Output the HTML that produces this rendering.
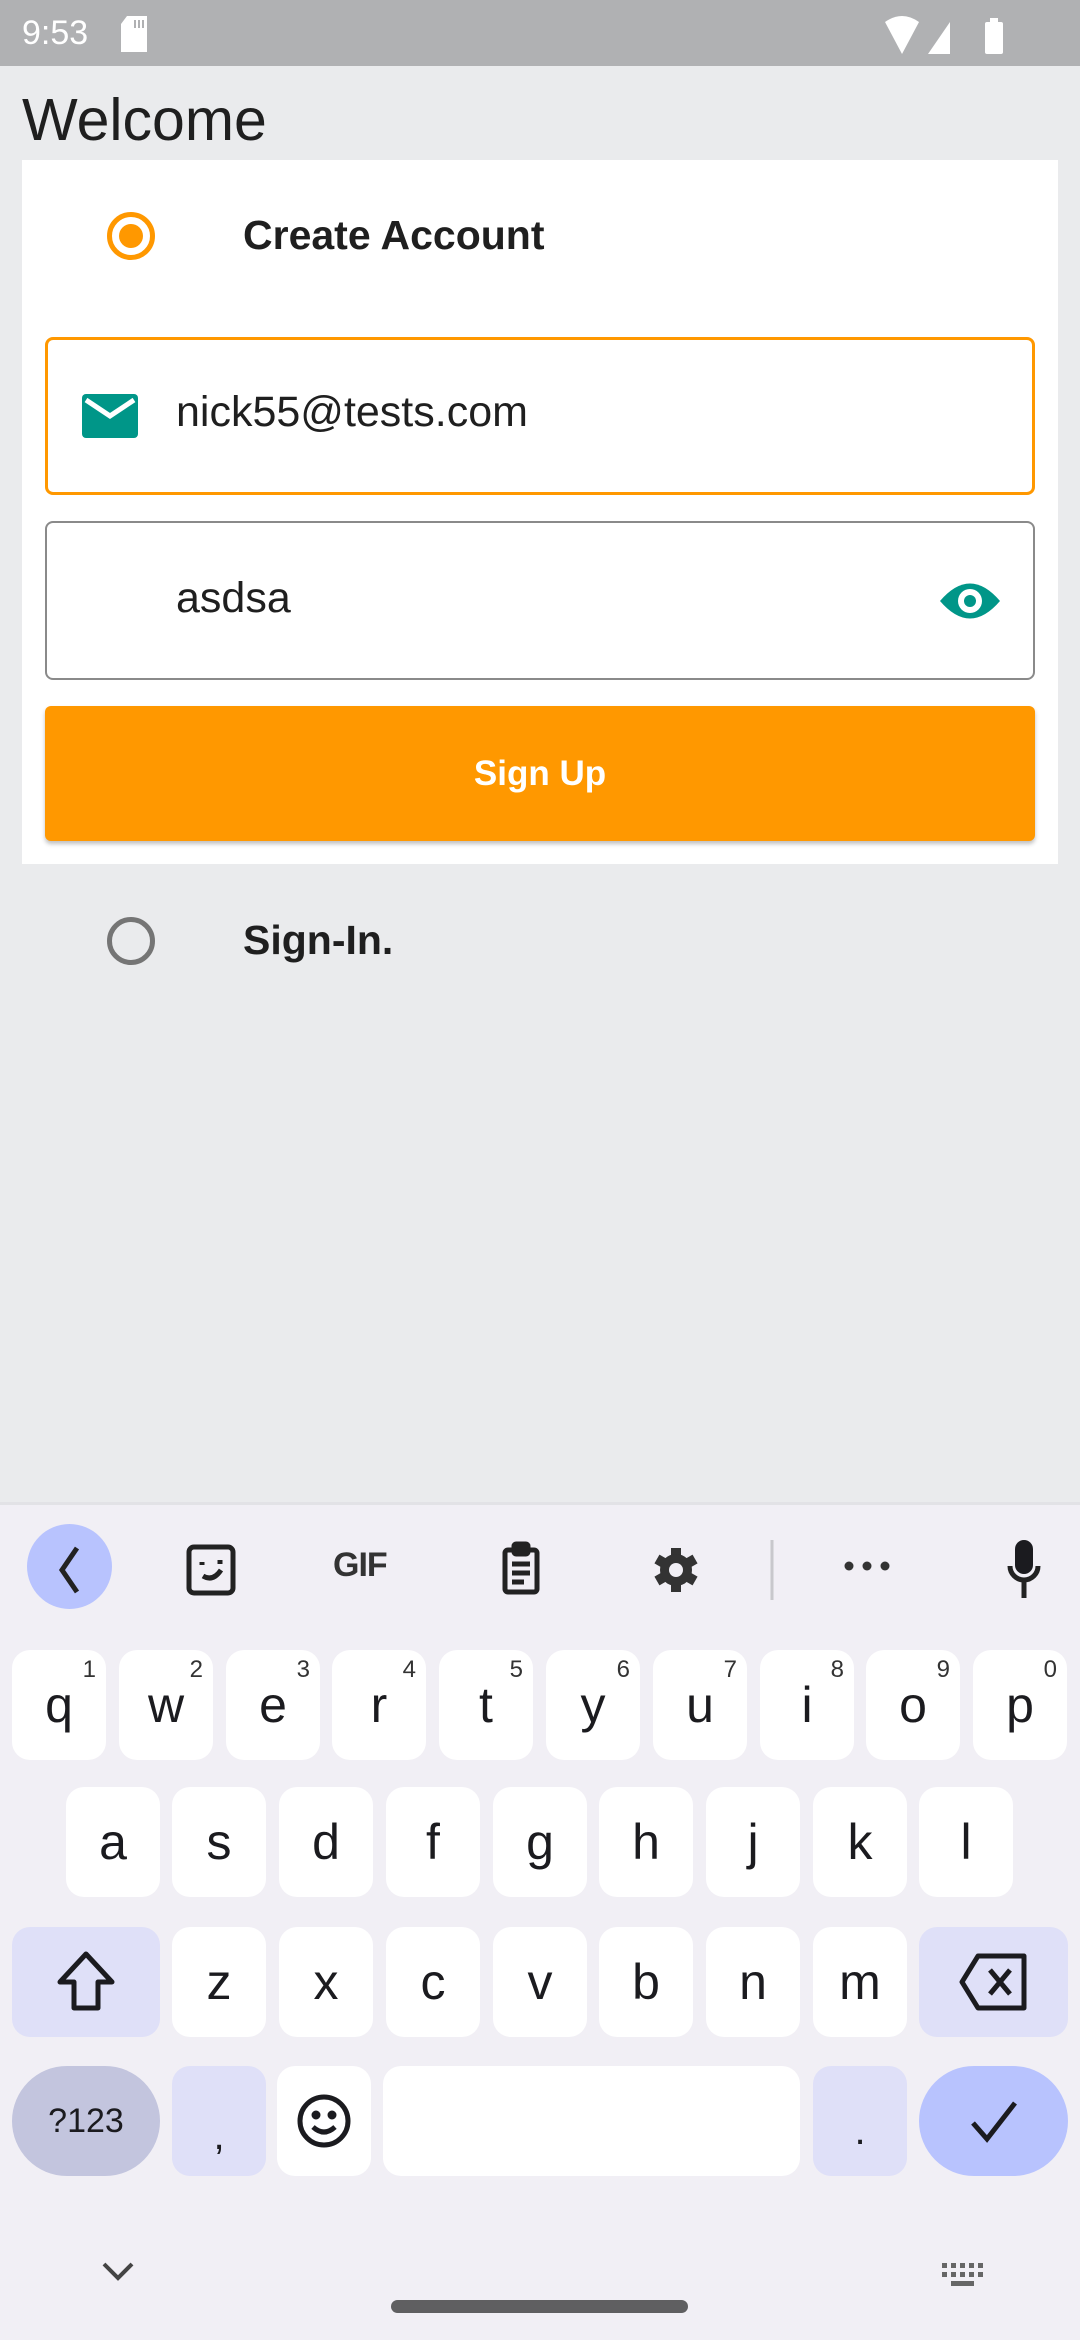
<!DOCTYPE html>
<html><head><meta charset="utf-8"><style>
*{margin:0;padding:0;box-sizing:border-box}
body{width:1080px;height:2340px;background:#eaebed;font-family:"Liberation Sans",sans-serif;position:relative;overflow:hidden}
.a{position:absolute}
.key{position:absolute;background:#fff;border-radius:18px;font-size:50px;color:#1b1b1f;display:flex;align-items:center;justify-content:center;height:110px}
.key sup{position:absolute;top:6px;right:10px;font-size:24px;color:#333}
.mod{background:#dfe0f8}
</style></head><body>
<div class="a" style="left:0;top:0;width:1080px;height:66px;background:#b0b1b3"></div>
<div class="a" style="left:22px;top:14px;font-size:34px;color:#fff">9:53</div>
<svg class="a" style="left:119px;top:16px" width="30" height="36"><path d="M8 0H28V36H2V8Z" fill="#fff"/><path d="M16 4v8M20 4v8M24 4v8" stroke="#b0b1b3" stroke-width="2"/></svg>
<svg class="a" style="left:882px;top:16px" width="130" height="40"><path d="M3 6Q20-6 37 6L20 38Z" fill="#fff"/><path d="M46 38L68 6V38Z" fill="#fff"/><rect x="103" y="6" width="18" height="32" rx="2" fill="#fff"/><rect x="108" y="2" width="8" height="6" fill="#fff"/></svg>
<div class="a" style="left:22px;top:86px;font-size:59px;color:#1f1f1f">Welcome</div>
<div class="a" style="left:22px;top:160px;width:1036px;height:704px;background:#fff"></div>
<div class="a" style="left:107px;top:212px;width:48px;height:48px;border:5px solid #ff9800;border-radius:50%"></div>
<div class="a" style="left:119px;top:224px;width:24px;height:24px;background:#ff9800;border-radius:50%"></div>
<div class="a" style="left:243px;top:212px;font-size:41px;font-weight:bold;color:#1f1f1f">Create Account</div>
<div class="a" style="left:45px;top:337px;width:990px;height:158px;border:3px solid #ff9800;border-radius:8px"></div>
<svg class="a" style="left:82px;top:394px" width="56" height="44"><rect width="56" height="44" rx="4" fill="#009688"/><path d="M4 6L28 22L52 6" stroke="#fff" stroke-width="5" fill="none"/></svg>
<div class="a" style="left:176px;top:388px;font-size:43px;color:#1f1f1f">nick55@tests.com</div>
<div class="a" style="left:45px;top:521px;width:990px;height:159px;border:2px solid #8a8a8a;border-radius:8px"></div>
<div class="a" style="left:176px;top:574px;font-size:43px;color:#1f1f1f">asdsa</div>
<svg class="a" style="left:938px;top:580px" width="64" height="42"><path d="M2 21Q32-14 62 21Q32 56 2 21Z" fill="#009688"/><circle cx="32" cy="21" r="12" fill="#fff"/><circle cx="32" cy="21" r="6" fill="#009688"/></svg>
<div class="a" style="left:45px;top:706px;width:990px;height:135px;background:#ff9800;border-radius:6px;box-shadow:0 3px 4px rgba(0,0,0,.25);color:#fff;font-size:35px;font-weight:bold;display:flex;align-items:center;justify-content:center">Sign Up</div>
<div class="a" style="left:107px;top:917px;width:48px;height:48px;border:5px solid #757575;border-radius:50%"></div>
<div class="a" style="left:243px;top:917px;font-size:41px;font-weight:bold;color:#1f1f1f">Sign-In.</div>
<div class="a" style="left:0;top:1502px;width:1080px;height:838px;background:#f1eff5;border-top:3px solid #e2e2e6"></div>
<div class="a" style="left:27px;top:1524px;width:85px;height:85px;background:#b8c3fe;border-radius:50%"></div>
<svg class="a" style="left:0;top:1540px" width="1080" height="60" fill="none" stroke="#222" stroke-width="5">
<path d="M77 8L62 30L77 52"/>
<rect x="189" y="7" width="44" height="46" rx="5"/><path d="M202 22v3M220 20v4M203 36q10 6 18-6"/>
<rect x="505" y="10" width="32" height="42" rx="3"/><rect x="514" y="4" width="14" height="10" rx="2" fill="#222"/><path d="M512 24h18M512 33h18M512 42h12"/>
<path d="M772 -3v64" stroke="#c8c8cc" stroke-width="3"/>
<path d="M1010 26a14 14 0 0 0 28 0M1024 40v18"/>
</svg>
<svg class="a" style="left:646px;top:1540px" width="60" height="60">
<g fill="#333" transform="translate(30 30)">
<rect x="-5" y="-22" width="10" height="44"/><rect x="-5" y="-22" width="10" height="44" transform="rotate(60)"/><rect x="-5" y="-22" width="10" height="44" transform="rotate(120)"/>
<circle r="16"/></g><circle cx="30" cy="30" r="7" fill="#f1eff5"/></svg>
<div class="a" style="left:333px;top:1546px;font-size:34px;font-weight:bold;color:#333;letter-spacing:-1px">GIF</div>
<svg class="a" style="left:840px;top:1556px" width="60" height="20"><circle cx="9" cy="10" r="4.5" fill="#333"/><circle cx="27" cy="10" r="4.5" fill="#333"/><circle cx="45" cy="10" r="4.5" fill="#333"/></svg>
<svg class="a" style="left:1010px;top:1538px" width="30" height="40"><rect x="5" y="2" width="18" height="34" rx="9" fill="#1b1b1f"/></svg>

<div class="key" style="left:12px;top:1650px;width:94px">q<sup>1</sup></div>
<div class="key" style="left:119px;top:1650px;width:94px">w<sup>2</sup></div>
<div class="key" style="left:226px;top:1650px;width:94px">e<sup>3</sup></div>
<div class="key" style="left:332px;top:1650px;width:94px">r<sup>4</sup></div>
<div class="key" style="left:439px;top:1650px;width:94px">t<sup>5</sup></div>
<div class="key" style="left:546px;top:1650px;width:94px">y<sup>6</sup></div>
<div class="key" style="left:653px;top:1650px;width:94px">u<sup>7</sup></div>
<div class="key" style="left:760px;top:1650px;width:94px">i<sup>8</sup></div>
<div class="key" style="left:866px;top:1650px;width:94px">o<sup>9</sup></div>
<div class="key" style="left:973px;top:1650px;width:94px">p<sup>0</sup></div>

<div class="key" style="left:66px;top:1787px;width:94px">a</div>
<div class="key" style="left:172px;top:1787px;width:94px">s</div>
<div class="key" style="left:279px;top:1787px;width:94px">d</div>
<div class="key" style="left:386px;top:1787px;width:94px">f</div>
<div class="key" style="left:493px;top:1787px;width:94px">g</div>
<div class="key" style="left:599px;top:1787px;width:94px">h</div>
<div class="key" style="left:706px;top:1787px;width:94px">j</div>
<div class="key" style="left:813px;top:1787px;width:94px">k</div>
<div class="key" style="left:919px;top:1787px;width:94px">l</div>

<div class="key mod" style="left:12px;top:1927px;width:148px"><svg width="64" height="64" fill="none" stroke="#1b1b1f" stroke-width="5"><path d="M32 4L6 32H20V58H44V32H58Z" stroke-linejoin="round"/></svg></div>
<div class="key" style="left:172px;top:1927px;width:94px">z</div>
<div class="key" style="left:279px;top:1927px;width:94px">x</div>
<div class="key" style="left:386px;top:1927px;width:94px">c</div>
<div class="key" style="left:493px;top:1927px;width:94px">v</div>
<div class="key" style="left:599px;top:1927px;width:94px">b</div>
<div class="key" style="left:706px;top:1927px;width:94px">n</div>
<div class="key" style="left:813px;top:1927px;width:94px">m</div>
<div class="key mod" style="left:919px;top:1927px;width:149px"><svg width="72" height="60" fill="none" stroke="#1b1b1f" stroke-width="5"><path d="M20 4H66V56H20L4 30Z" stroke-linejoin="round"/><path d="M32 18L52 42M52 18L32 42"/></svg></div>

<div class="key" style="left:12px;top:2066px;width:148px;background:#c3c5de;border-radius:55px;font-size:34px">?123</div>
<div class="key mod" style="left:172px;top:2066px;width:94px;font-size:40px;padding-top:30px">,</div>
<div class="key" style="left:277px;top:2066px;width:94px"><svg width="56" height="56" fill="none" stroke="#1b1b1f" stroke-width="5"><circle cx="28" cy="28" r="24"/><circle cx="20" cy="22" r="2" fill="#1b1b1f"/><circle cx="36" cy="22" r="2" fill="#1b1b1f"/><path d="M17 34q11 10 22 0"/></svg></div>
<div class="key" style="left:383px;top:2066px;width:417px"></div>
<div class="key mod" style="left:813px;top:2066px;width:94px;font-size:40px;padding-top:20px">.</div>
<div class="key" style="left:919px;top:2066px;width:149px;background:#b8c3fe;border-radius:55px"><svg width="50" height="44" fill="none" stroke="#1b1b1f" stroke-width="5"><path d="M4 24L18 40L46 4"/></svg></div>

<svg class="a" style="left:100px;top:2260px" width="36" height="24" fill="none" stroke="#444" stroke-width="4"><path d="M4 4L18 18L32 4"/></svg>
<svg class="a" style="left:942px;top:2263px" width="44" height="26" fill="#666"><rect x="0" y="0" width="5" height="5"/><rect x="9" y="0" width="5" height="5"/><rect x="18" y="0" width="5" height="5"/><rect x="27" y="0" width="5" height="5"/><rect x="36" y="0" width="5" height="5"/><rect x="0" y="9" width="5" height="5"/><rect x="9" y="9" width="5" height="5"/><rect x="18" y="9" width="5" height="5"/><rect x="27" y="9" width="5" height="5"/><rect x="36" y="9" width="5" height="5"/><rect x="9" y="18" width="23" height="5"/></svg>
<div class="a" style="left:391px;top:2300px;width:297px;height:13px;background:#5f5f61;border-radius:7px"></div>
</body></html>
